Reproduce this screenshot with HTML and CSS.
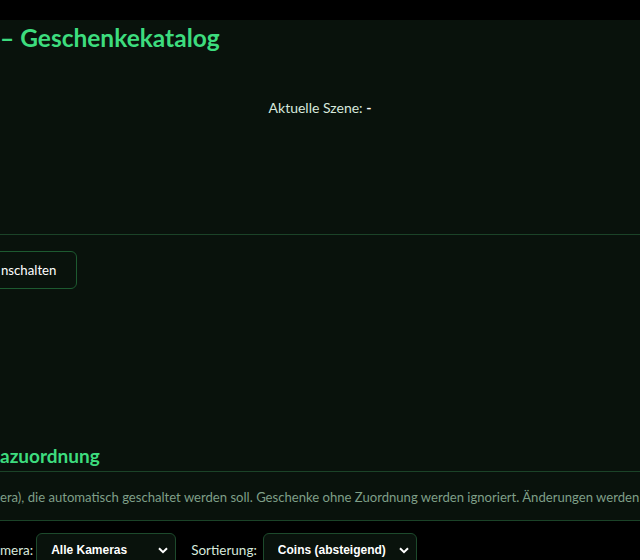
FILE: index.html
```html
<!DOCTYPE html>
<html lang="de">
<head>
    <meta charset="UTF-8">
    <meta name="viewport" content="width=device-width, initial-scale=1.0">
    <title>Geschenkekatalog</title>
    <link rel="stylesheet" href="styles.css">
</head>
<body>
    <section class="card">
        <header class="card-head">
            <h1 class="title">– Geschenkekatalog</h1>
            <p class="scene">Aktuelle Szene: <strong id="currentScene">-</strong></p>
        </header>

        <div class="toolbar">
            <button class="btn" type="button">nschalten</button>
        </div>

        <div class="catalog-empty"></div>

        <h2 class="section-title">azuordnung</h2>
        <p class="hint">era), die automatisch geschaltet werden soll. Geschenke ohne Zuordnung werden ignoriert. Änderungen werden</p>
    </section>

    <div class="filters">
        <label class="filter">
            <span>mera:</span>
            <span class="select-wrap">
                <select>
                    <option>Alle Kameras</option>
                </select>
                <svg class="chevron" width="10" height="7" viewBox="0 0 10 7"><path d="M1 1.2l4 4 4-4" fill="none" stroke="#fff" stroke-width="2"/></svg>
            </span>
        </label>
        <label class="filter">
            <span>Sortierung:</span>
            <span class="select-wrap">
                <select class="sort">
                    <option>Coins (absteigend)</option>
                </select>
                <svg class="chevron" width="10" height="7" viewBox="0 0 10 7"><path d="M1 1.2l4 4 4-4" fill="none" stroke="#fff" stroke-width="2"/></svg>
            </span>
        </label>
    </div>
</body>
</html>
```

FILE: styles.css
```css
/* Basic Styles */
body {
    margin: 0;
    padding-top: 20px;
    background-color: #000;
    color: #d7e8dc;
    font-family: Lato, 'Open Sans', sans-serif;
    font-size: 14px;
    overflow: hidden;
}

.card {
    background-color: #09120c;
    border-bottom: 1px solid #1b4328;
}

.card-head {
    height: 215px;
    border-bottom: 1px solid #1b4328;
    box-sizing: border-box;
}

.title {
    margin: 0;
    padding-top: 3px;
    font-size: 24.5px;
    line-height: 30px;
    font-weight: 700;
    color: #3ddc7e;
}

.scene {
    margin: 45px 0 0;
    text-align: center;
    font-size: 14px;
    line-height: 20px;
}

.scene strong {
    color: #fff;
}

/* Toolbar */
.toolbar {
    display: flex;
    padding-top: 16px;
}

.btn {
    height: 38px;
    margin-left: -20px;
    padding: 0 20px;
    font-family: inherit;
    font-size: 13.2px;
    color: #fff;
    background-color: #09120c;
    border: 1px solid #1d5a30;
    border-radius: 6px;
}

.catalog-empty {
    height: 155px;
}

.section-title {
    margin: 0;
    padding-bottom: 3px;
    font-size: 19px;
    line-height: 24px;
    font-weight: 700;
    color: #3ddc7e;
    border-bottom: 1px solid #1b4328;
}

.hint {
    margin: 0;
    padding: 15px 0 13px;
    font-size: 13.1px;
    line-height: 20px;
    color: #7f9f88;
    white-space: nowrap;
}

/* Filters */
.filters {
    display: flex;
    gap: 15px;
    padding-top: 12px;
    font-size: 13.5px;
}

.filter {
    display: flex;
    align-items: center;
    gap: 3px;
}

.filter + .filter {
    gap: 6px;
}

.select-wrap {
    position: relative;
}

.filter select {
    appearance: none;
    width: 140px;
    height: 34px;
    padding: 0 14px;
    font-family: 'Liberation Sans', Arial, sans-serif;
    font-size: 12px;
    font-weight: 700;
    color: #fff;
    background-color: #09120c;
    border: 1px solid #1d4a2c;
    border-radius: 6px;
}

.filter select.sort {
    width: 154px;
}

.chevron {
    position: absolute;
    right: 8px;
    top: 14px;
    pointer-events: none;
}
```
